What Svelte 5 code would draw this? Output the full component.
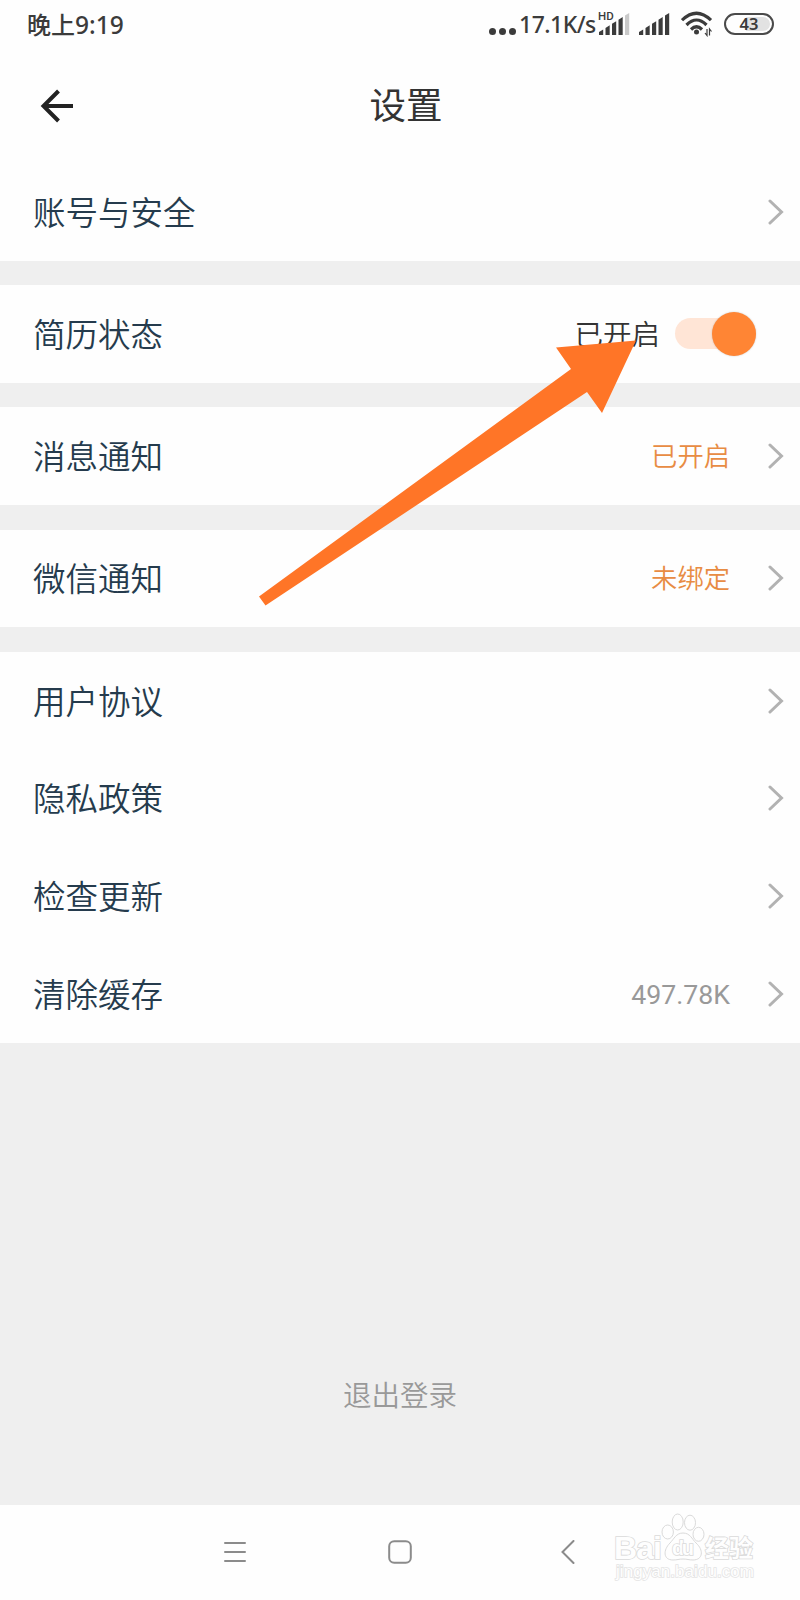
<script lang="ts">
    type Row = { label: string; value?: string; muted?: boolean; toggle?: boolean };

    const groups: Row[][] = [
        [{ label: "账号与安全" }],
        [{ label: "简历状态", value: "已开启", toggle: true }],
        [{ label: "消息通知", value: "已开启" }],
        [{ label: "微信通知", value: "未绑定" }],
        [
            { label: "用户协议" },
            { label: "隐私政策" },
            { label: "检查更新" },
            { label: "清除缓存", value: "497.78K", muted: true },
        ],
    ];

    const bars = [0, 1, 2, 3, 4];

    let enabled = $state(true);
</script>

{#snippet signal(weak: boolean)}
    <svg class="signal" width="31" height="22" viewBox="0 0 31 22">
        {#each bars as i}
            <path
                d="M{i * 6.5} 22v-{3 + i * 4.1}l4.2-2.6v{5.6 + i * 4.1}z"
                fill={weak && i == 4 ? "#c9c9c9" : "#3b3b3b"}
            />
        {/each}
    </svg>
{/snippet}

<div class="screen">
    <div class="status">
        <span class="time">晚上<b>9:19</b></span>
        <div class="indicators">
            <span class="dots"><i></i><i></i><i></i></span>
            <span class="speed">17.1K/s</span>
            <span class="sim">
                <span class="hd">HD</span>
                {@render signal(true)}
            </span>
            <span class="sim second">{@render signal(false)}</span>
            <svg class="wifi" width="32" height="26" viewBox="0 0 32 26">
                <g fill="none" stroke="#3b3b3b" stroke-width="3.2">
                    <path d="M1 9.2Q15.500 -4.800 30 9.200" />
                    <path d="M5.500 14Q15.500 4 25.500 14" />
                    <path d="M10 18.500Q15.500 13 21 18.500" />
                </g>
                <circle cx="15.500" cy="21" r="2.500" fill="#3b3b3b" />
                <path d="M26 18v6.500l-2-2.500M28.500 24.500v-6.500l2 2.500" fill="none" stroke="#3b3b3b" stroke-width="1.200" />
            </svg>
            <span class="battery">43</span>
        </div>
    </div>

    <header>
        <button class="back" aria-label="返回">
            <svg width="34" height="34" viewBox="0 0 34 34" fill="none" stroke="#222" stroke-width="4">
                <path d="M18.500 2L3.500 17L18.500 32M3.500 17H33" />
            </svg>
        </button>
        <h1>设置</h1>
    </header>

    <main>
        {#each groups as group}
            <section>
                {#each group as row}
                    <div class="row">
                        <span class="label">{row.label}</span>
                        {#if row.toggle}
                            <span class="state">{row.value}</span>
                            <button
                                class="toggle"
                                class:on={enabled}
                                aria-label={row.label}
                                onclick={() => (enabled = !enabled)}
                            ><i></i></button>
                        {:else}
                            {#if row.value}
                                <span class="value" class:muted={row.muted}>{row.value}</span>
                            {/if}
                            <svg class="chevron" width="16" height="26" viewBox="0 0 16 26">
                                <path d="M2 2L13.500 13L2 24" />
                            </svg>
                        {/if}
                    </div>
                {/each}
            </section>
        {/each}
        <button class="logout">退出登录</button>
    </main>

    <nav>
        <svg width="22" height="22" viewBox="0 0 22 22">
            <path d="M1 2H21M1 11H21M1 20H21" />
        </svg>
        <svg width="24" height="24" viewBox="0 0 24 24">
            <rect x="1.200" y="1.200" width="21.600" height="21.600" rx="5" />
        </svg>
        <svg width="14" height="24" viewBox="0 0 14 24">
            <path d="M12.500 1L1.500 12L12.500 23" />
        </svg>
    </nav>

    <svg class="arrow" width="378" height="268" viewBox="0 0 378 268">
        <path d="M377 1.500L297 8.500L312 30L0 257.500L6.500 266.500L328 53L343 74Z" />
    </svg>

    <svg class="watermark" width="150" height="76" viewBox="0 0 150 76">
        <g class="paw">
            <ellipse cx="53.700" cy="22" rx="5.700" ry="7" />
            <ellipse cx="63.700" cy="12" rx="5.500" ry="8" />
            <ellipse cx="76" cy="12.700" rx="5.500" ry="7.500" />
            <ellipse cx="84.500" cy="24.300" rx="5.500" ry="7" />
            <path d="M69 23C76 23 78 29 82 33C90 40 89 50 79 50C75 50 73 49 69 49C65 49 63 50 59 50C49 50 49 40 56 33C60 29 62 23 69 23Z" />
        </g>
        <text class="brand" x="0" y="48.500" textLength="48">Bai</text>
        <text class="du" x="58" y="45" textLength="22">du</text>
        <text class="brand cn" x="91" y="47" textLength="48">经验</text>
        <text class="site" x="2" y="67" textLength="138">jingyan.baidu.com</text>
    </svg>
</div>

<style>
    :global(body) {
        margin: 0;
    }

    .screen {
        position: relative;
        display: flex;
        flex-direction: column;
        width: 800px;
        height: 1600px;
        overflow: hidden;
        background: #fefefe;
        font-family: Roboto, "Noto Sans CJK SC", sans-serif;
    }

    button {
        padding: 0;
        border: none;
        background: none;
        font-family: inherit;
    }

    .status {
        display: flex;
        justify-content: space-between;
        align-items: center;
        height: 48px;
        padding: 0 26px 0 27px;
        color: #3b3b3b;
    }
    .time {
        font-family: "Noto Sans CJK SC", sans-serif;
        font-size: 24px;
        font-weight: 500;
        line-height: 48px;
    }
    .time b {
        font-family: "Noto Sans", sans-serif;
        font-size: 24.500px;
        font-weight: 500;
    }
    .indicators {
        display: flex;
        align-items: center;
        height: 48px;
    }
    .dots {
        display: flex;
        gap: 3px;
        margin: 15px 3px 0 0;
    }
    .dots i {
        width: 7px;
        height: 7px;
        border-radius: 50%;
        background: #3b3b3b;
    }
    .speed {
        width: 80px;
        font-family: "Noto Sans", sans-serif;
        font-size: 23px;
        font-weight: 500;
        letter-spacing: -0.500px;
        line-height: 48px;
        white-space: nowrap;
    }
    .sim {
        position: relative;
        height: 22px;
        margin-right: 9px;
    }
    .sim.second {
        margin-right: 11px;
    }
    .signal {
        display: block;
    }
    .hd {
        position: absolute;
        top: -2px;
        left: -1px;
        padding-right: 1px;
        background: #fefefe;
        font-size: 11.500px;
        font-weight: 500;
        line-height: 11px;
    }
    .wifi {
        margin-right: 11px;
    }
    .battery {
        box-sizing: border-box;
        width: 50px;
        height: 22px;
        border: 2px solid #4a4a4a;
        border-radius: 11px;
        background: linear-gradient(90deg, #fefefe 43%, #e2e2e2 43%);
        box-shadow: inset 0 0 0 2px #fefefe;
        font-family: "Noto Sans", sans-serif;
        font-size: 16.500px;
        font-weight: 600;
        line-height: 18px;
        text-align: center;
    }

    header {
        display: grid;
        grid-template-columns: 1fr auto 1fr;
        align-items: center;
        height: 115px;
        box-sizing: border-box;
        padding: 0 28px 0 40px;
    }
    .back {
        width: 34px;
        height: 34px;
    }
    .back svg {
        display: block;
    }
    h1 {
        margin: 0;
        padding-top: 3px;
        color: #333;
        font-size: 36.500px;
        font-weight: 400;
        line-height: 50px;
    }

    main {
        display: flex;
        flex-direction: column;
        gap: 24.400px;
        height: 1342px;
        background: #efefef;
    }
    section {
        background: #fefefe;
    }
    .row {
        display: flex;
        align-items: center;
        height: 97.800px;
        box-sizing: border-box;
        padding: 0 16px 0 33px;
    }
    .label {
        flex: 1;
        padding-bottom: 3px;
        color: #253b4d;
        font-size: 32.500px;
        font-weight: 350;
    }
    .value {
        margin-right: 38px;
        padding-bottom: 3px;
        color: #e88c43;
        font-size: 26.300px;
        font-weight: 350;
    }
    .value.muted {
        padding: 2px 0 0;
        color: #999;
        font-size: 26.700px;
        font-weight: 400;
    }
    .state {
        margin-right: 15px;
        padding-bottom: 3px;
        color: #333;
        font-size: 28.500px;
        font-weight: 350;
    }
    .chevron path {
        fill: none;
        stroke: #b2b2b2;
        stroke-width: 3;
        stroke-linecap: round;
    }
    .toggle {
        display: flex;
        align-items: center;
        width: 81px;
        height: 31px;
        margin-right: 28px;
        margin-bottom: 1px;
        border-radius: 16px;
        background: #e3e3e3;
    }
    .toggle i {
        width: 44px;
        height: 44px;
        border-radius: 50%;
        background: #fff;
        box-shadow: 0 0 2px rgba(0, 0, 0, 0.2);
    }
    .toggle.on {
        justify-content: flex-end;
        background: #ffe5d6;
    }
    .toggle.on i {
        background: #ff8534;
    }
    .logout {
        align-self: center;
        margin-top: 309px;
        color: #999;
        font-size: 28.500px;
        font-weight: 350;
        line-height: 42px;
    }

    nav {
        display: flex;
        align-items: center;
        flex: 1;
        padding: 0 0 1px 224px;
        background: #fefefe;
    }
    nav svg {
        flex: none;
        margin-right: 149px;
        fill: none;
        stroke: #8b8b8b;
        stroke-width: 2;
        stroke-linecap: round;
    }
    nav svg:first-child {
        margin-right: 142px;
    }

    .arrow {
        position: absolute;
        top: 339px;
        left: 259px;
        fill: #ff7527;
        pointer-events: none;
    }

    .watermark {
        position: absolute;
        top: 1510px;
        left: 614px;
        overflow: visible;
    }
    .paw,
    .watermark text {
        fill: #fefefe;
        stroke: #dadada;
        stroke-width: 1;
    }
    .watermark text {
        font-family: "Liberation Sans", sans-serif;
        paint-order: stroke;
        stroke-width: 1.600;
    }
    .watermark .brand {
        font-size: 32px;
        font-weight: 700;
    }
    .watermark .cn {
        font-family: "Noto Sans CJK SC", sans-serif;
        font-size: 24px;
    }
    .watermark .du {
        font-size: 20px;
        font-weight: 700;
    }
    .watermark .site {
        font-size: 17px;
        stroke: #e4e4e4;
    }
</style>
